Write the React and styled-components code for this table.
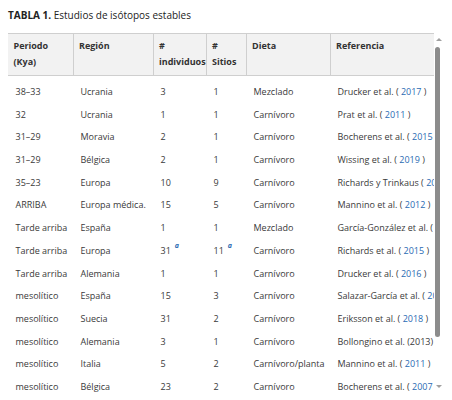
import React from "react";
import styled, { createGlobalStyle } from "styled-components";

const GlobalStyle = createGlobalStyle`
  body {
    margin: 0;
    background: #fff;
    font-family: "Open Sans", "Noto Sans", sans-serif;
    color: #333;
  }
`;

const Page = styled.div`
  padding: 7px 8px 0 8px;
`;

const Caption = styled.div`
  font-size: 10px;
  line-height: 16px;
  color: #222;
  margin-bottom: 10px;

  b {
    font-weight: 700;
  }
`;

const Frame = styled.div`
  display: flex;
  width: 436px;
  height: 359px;
`;

const Viewport = styled.div`
  width: 426px;
  overflow: hidden;
`;

const ScrollTrack = styled.div`
  width: 10px;
  display: flex;
  flex-direction: column;
  align-items: center;
`;

const Arrow = styled.div`
  height: 12px;
  width: 10px;
  display: flex;
  align-items: center;
  justify-content: center;

  &::before {
    content: "";
    border-left: 3px solid transparent;
    border-right: 3px solid transparent;
    ${(p) =>
      p.down
        ? "border-top: 3px solid #a0a0a0;"
        : "border-bottom: 3px solid #a0a0a0;"}
  }
`;

const ThumbArea = styled.div`
  flex: 1;
  width: 10px;
  padding: 2px 0 0 2px;
`;

const Thumb = styled.div`
  width: 5px;
  height: 290px;
  background: #8c8c8c;
  border-radius: 3px;
`;

const Table = styled.table`
  border-collapse: collapse;
  table-layout: fixed;
  width: 500px;
  font-size: 9px;
`;

const Head = styled.th`
  box-sizing: border-box;
  width: ${(p) => p.w}px;
  background: #f2f2f2;
  border-top: 1px solid #cfcfcf;
  border-bottom: 1px solid #cfcfcf;
  border-right: 1px solid #cfcfcf;
  padding: 4px 2px 4px 5.5px;
  text-align: left;
  vertical-align: top;
  font-weight: 700;
  line-height: 16px;
  color: #333;
  height: 42px;
`;

const Row = styled.tr`
  &:first-child td {
    padding-top: 8px;
  }
`;

const Cell = styled.td`
  box-sizing: border-box;
  padding: 3.35px 4px 3.35px 7.5px;
  line-height: 16px;
  white-space: nowrap;
  color: #3a3a3a;
  overflow: visible;
`;

const Link = styled.a`
  color: #2a6bb3;
  text-decoration: none;
`;

const Note = styled.sup`
  color: #2a6bb3;
  font-style: italic;
  font-weight: 700;
  font-size: 7px;
  margin-left: 4px;
  vertical-align: 6px;
  line-height: 0;
`;

const rows = [
  ["38–33", "Ucrania", "3", "1", "Mezclado", "Drucker et al.", "2017"],
  ["32", "Ucrania", "1", "1", "Carnívoro", "Prat et al.", "2011"],
  ["31–29", "Moravia", "2", "1", "Carnívoro", "Bocherens et al.", "2015"],
  ["31–29", "Bélgica", "2", "1", "Carnívoro", "Wissing et al.", "2019"],
  ["35–23", "Europa", "10", "9", "Carnívoro", "Richards y Trinkaus", "2009"],
  ["ARRIBA", "Europa médica.", "15", "5", "Carnívoro", "Mannino et al.", "2012"],
  ["Tarde arriba", "España", "1", "1", "Mezclado", "García-González et al.", "2015"],
  ["Tarde arriba", "Europa", "31", "11", "Carnívoro", "Richards et al.", "2015", true],
  ["Tarde arriba", "Alemania", "1", "1", "Carnívoro", "Drucker et al.", "2016"],
  ["mesolítico", "España", "15", "3", "Carnívoro", "Salazar-García et al.", "2014"],
  ["mesolítico", "Suecia", "31", "2", "Carnívoro", "Eriksson et al.", "2018"],
  ["mesolítico", "Alemania", "3", "1", "Carnívoro", "Bollongino et al. (2013)", null],
  ["mesolítico", "Italia", "5", "2", "Carnívoro/planta", "Mannino et al.", "2011"],
  ["mesolítico", "Bélgica", "23", "2", "Carnívoro", "Bocherens et al.", "2007"],
];

export default function App() {
  return (
    <Page>
      <GlobalStyle />
      <Caption>
        <b>TABLA 1.</b> Estudios de isótopos estables
      </Caption>
      <Frame>
        <Viewport>
          <Table>
            <thead>
              <tr>
                <Head w={65}>Periodo (Kya)</Head>
                <Head w={80}>Región</Head>
                <Head w={53}># individuos</Head>
                <Head w={40}># Sitios</Head>
                <Head w={84}>Dieta</Head>
                <Head w={178}>Referencia</Head>
              </tr>
            </thead>
            <tbody>
              {rows.map((r, i) => (
                <Row key={i}>
                  <Cell>{r[0]}</Cell>
                  <Cell>{r[1]}</Cell>
                  <Cell>
                    {r[2]}
                    {r[7] && <Note>a</Note>}
                  </Cell>
                  <Cell>
                    {r[3]}
                    {r[7] && <Note>a</Note>}
                  </Cell>
                  <Cell>{r[4]}</Cell>
                  <Cell>
                    {r[6] ? (
                      <>
                        {r[5]} ( <Link href="#">{r[6]}</Link> )
                      </>
                    ) : (
                      r[5]
                    )}
                  </Cell>
                </Row>
              ))}
            </tbody>
          </Table>
        </Viewport>
        <ScrollTrack>
          <Arrow />
          <ThumbArea>
            <Thumb />
          </ThumbArea>
          <Arrow down />
        </ScrollTrack>
      </Frame>
    </Page>
  );
}
